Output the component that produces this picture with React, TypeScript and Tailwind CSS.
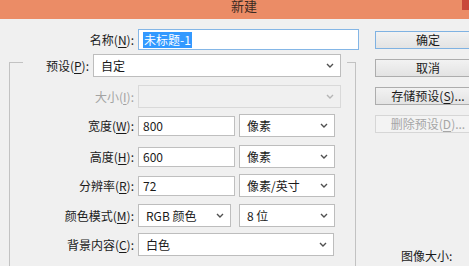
import type { ReactNode } from 'react';

const font = "font-[family-name:'Noto_Sans_CJK_SC','Noto_Sans',sans-serif]";

function Key({ children }: { children: ReactNode }) {
  return <span className="underline underline-offset-[2px]">{children}</span>;
}

function Chevron({ muted = false }: { muted?: boolean }) {
  return (
    <svg width="8" height="5" viewBox="0 0 8 5" className="shrink-0">
      <path d="M1 1 L4 4 L7 1" fill="none" stroke={muted ? '#b5b5b5' : '#505050'} strokeWidth="1.4" />
    </svg>
  );
}

function Select({ value, width, disabled = false }: { value?: ReactNode; width: string; disabled?: boolean }) {
  return (
    <div
      className={`flex h-[23px] items-center justify-between pl-[7px] pr-[6px] border ${width} ${
        disabled ? 'border-[#d9d9d9] bg-[#f0f0f0]' : 'border-[#bdbdbd] bg-white'
      }`}
    >
      <span className="text-[12px] leading-none text-[#1a1a1a]">{value}</span>
      <Chevron muted={disabled} />
    </div>
  );
}

function Field({ value, width }: { value: string; width: string }) {
  return (
    <div className={`flex h-[20px] items-center border border-[#bfbfbf] bg-white pl-[4px] ${width}`}>
      <span className="text-[12px] leading-none text-[#1a1a1a]">{value}</span>
    </div>
  );
}

function Row({ label, children, gap = 'gap-[4px]', muted = false, extra = '' }: { label: ReactNode; children: ReactNode; gap?: string; muted?: boolean; extra?: string }) {
  return (
    <div className={`flex h-[23px] items-center ${gap} ${extra}`}>
      <div className={`w-[124px] text-right text-[12px] leading-none ${muted ? 'text-[#a3a3a3]' : 'text-[#1a1a1a]'}`}>{label}</div>
      {children}
    </div>
  );
}

function Button({ children, tone = 'normal', extra = '' }: { children: ReactNode; tone?: 'default' | 'normal' | 'disabled'; extra?: string }) {
  const border =
    tone === 'default' ? 'border-[#7fb2e2]' : tone === 'disabled' ? 'border-[#d6d6d6]' : 'border-[#adadad]';
  const face =
    tone === 'disabled' ? 'bg-[#f3f3f3] text-[#a6a6a6]' : 'bg-gradient-to-b from-[#f2f2f2] to-[#e3e3e3] text-[#1a1a1a]';
  return (
    <div className={`flex h-[18px] w-[106px] items-center justify-center border text-[12px] leading-none ${border} ${face} ${extra}`}>
      {children}
    </div>
  );
}

export default function App() {
  return (
    <div className={`h-[266px] w-[469px] overflow-hidden bg-[#f0f0f0] ${font}`}>
      <div className="flex h-[19px] items-start bg-[#eb8c66]">
        <span className="-mt-[1px] pl-[231px] text-[13px] leading-[13px] text-[#3b2a22]">新建</span>
        <div className="ml-auto h-[10px] w-[7px] bg-[#c9473a]" />
      </div>

      <div className="flex">
        <div className="w-[360px] shrink-0">
          <div className="mt-[10px] flex h-[21px] items-center gap-[4px]">
            <div className="w-[134px] text-right text-[12px] leading-none text-[#1a1a1a]">
              名称(<Key>N</Key>):
            </div>
            <div className="flex h-[21px] w-[221px] items-center border border-[#84b6e6] bg-white pl-[4px]">
              <span className="bg-[#3399ff] px-[1px] text-[12px] leading-[16px] text-white">未标题-1</span>
            </div>
          </div>

          <div className="ml-[9px] mt-[12px] w-[347px] border-x border-[#c2c2c2] pb-[20px]">
            <div className="flex h-px justify-between">
              <div className="h-px w-[13px] bg-[#c2c2c2]" />
              <div className="h-px w-[8px] bg-[#c2c2c2]" />
            </div>

            <div className="-mt-[9px] flex h-[23px] items-center gap-[4px]">
              <div className="w-[79px] text-right text-[12px] leading-none text-[#1a1a1a]">
                预设(<Key>P</Key>):
              </div>
              <Select value="自定" width="w-[248px]" />
            </div>

            <Row label={<>大小(<Key>I</Key>):</>} muted extra="mt-[8px]">
              <Select width="w-[203px]" disabled />
            </Row>

            <Row label={<>宽度(<Key>W</Key>):</>} extra="mt-[6px]">
              <Field value="800" width="w-[97px]" />
              <Select value="像素" width="w-[96px]" />
            </Row>

            <Row label={<>高度(<Key>H</Key>):</>} extra="mt-[8px]">
              <Field value="600" width="w-[97px]" />
              <Select value="像素" width="w-[96px]" />
            </Row>

            <Row label={<>分辨率(<Key>R</Key>):</>} extra="mt-[6px]">
              <Field value="72" width="w-[97px]" />
              <Select value="像素/英寸" width="w-[96px]" />
            </Row>

            <Row label={<>颜色模式(<Key>M</Key>):</>} gap="gap-[4px]" extra="mt-[7px]">
              <Select value="RGB 颜色" width="w-[93px]" />
              <div className="ml-[4px]">
                <Select value="8 位" width="w-[96px]" />
              </div>
            </Row>

            <Row label={<>背景内容(<Key>C</Key>):</>} extra="mt-[6px]">
              <Select value="白色" width="w-[196px]" />
            </Row>
          </div>
        </div>

        <div className="ml-[15px] flex shrink-0 flex-col pt-[12px]">
          <Button tone="default">确定</Button>
          <Button extra="mt-[10px]">取消</Button>
          <Button extra="mt-[10px]">
            存储预设(<Key>S</Key>)...
          </Button>
          <Button tone="disabled" extra="mt-[10px]">
            删除预设(<Key>D</Key>)...
          </Button>
          <div className="ml-[26px] mt-[115px] text-[12px] leading-[16px] text-[#1a1a1a]">图像大小:</div>
        </div>
      </div>
    </div>
  );
}
